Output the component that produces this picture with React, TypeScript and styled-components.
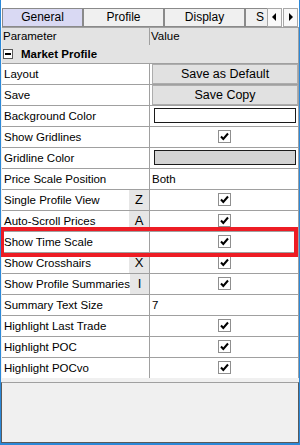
import styled, { createGlobalStyle } from 'styled-components';

const GlobalStyle = createGlobalStyle`
  html, body {
    margin: 0;
    padding: 0;
    background: #ffffff;
  }
  * {
    box-sizing: border-box;
  }
`;

const Frame = styled.div`
  position: relative;
  display: flex;
  flex-direction: column;
  width: 300px;
  height: 445px;
  border-left: 1px solid #2b88d8;
  border-right: 1px solid #2b88d8;
  border-bottom: 2px solid #2b88d8;
  background: #f0f0f0;
  font-family: "Liberation Sans", Arial, sans-serif;
  font-size: 11.5px;
  color: #000000;
  overflow: hidden;
`;

const TabStrip = styled.div`
  display: flex;
  align-items: flex-end;
  height: 27px;
  padding-left: 1px;
  background: #ffffff;
`;

const TabRow = styled.div`
  display: flex;
  width: 266px;
  overflow: hidden;
`;

const Tab = styled.div<{ $active?: boolean; $partial?: boolean }>`
  flex: 0 0 ${(p) => (p.$partial ? '24px' : '82px')};
  height: 19px;
  display: flex;
  align-items: center;
  justify-content: ${(p) => (p.$partial ? 'flex-start' : 'center')};
  padding-left: ${(p) => (p.$partial ? '10px' : '0')};
  margin-right: -1px;
  border: 1px solid #8a8a8a;
  border-right-width: ${(p) => (p.$partial ? '0' : '2px')};
  background: ${(p) => (p.$active ? '#d9d9f3' : '#f0f0f0')};
  font-size: 12px;
  white-space: nowrap;
`;

const ScrollButtons = styled.div`
  display: flex;
  height: 19px;
`;

const ScrollButton = styled.div`
  width: 15px;
  height: 19px;
  display: flex;
  align-items: center;
  justify-content: center;
  border: 1px solid #a8a8a8;
  background: #f9f9f9;
  margin-right: 1px;
`;

const Grid = styled.div`
  margin-left: 1px;
  width: 297px;
  border-right: 1px solid #a0a0a0;
  background: #ffffff;
`;

const HeaderRow = styled.div`
  display: flex;
  height: 18px;
  background: #e3e3e3;
  border-top: 1px solid #a0a0a0;
`;

const HeaderCell = styled.div<{ $left?: boolean }>`
  width: ${(p) => (p.$left ? '148px' : '147px')};
  display: flex;
  align-items: center;
  padding-left: 1px;
  border-right: ${(p) => (p.$left ? '1px solid #a0a0a0' : 'none')};
`;

const CategoryRow = styled.div`
  display: flex;
  align-items: center;
  gap: 8px;
  height: 18px;
  padding-left: 1px;
  background: #e3e3e3;
  font-weight: bold;
`;

const Collapse = styled.div`
  position: relative;
  width: 10px;
  height: 10px;
  border: 1px solid #5a5a5a;
  background: #ffffff;
  &::after {
    content: '';
    position: absolute;
    left: 1px;
    right: 1px;
    top: 3px;
    height: 2px;
    background: #000000;
  }
`;

const Row = styled.div`
  display: flex;
  height: 21px;
  border-top: 1px solid #a0a0a0;
`;

const NameCell = styled.div`
  width: 148px;
  display: flex;
  border-right: 1px solid #a0a0a0;
`;

const NameText = styled.div`
  flex: 1;
  display: flex;
  align-items: center;
  padding-left: 2px;
  white-space: nowrap;
`;

const Key = styled.div`
  width: 20px;
  display: flex;
  align-items: center;
  justify-content: center;
  background: #e6e6e6;
  font-size: 13px;
`;

const ValueCell = styled.div<{ $center?: boolean }>`
  width: 148px;
  display: flex;
  align-items: center;
  justify-content: ${(p) => (p.$center ? 'center' : 'flex-start')};
  padding-left: ${(p) => (p.$center ? '0' : '2px')};
`;

const CellButton = styled.div`
  width: 100%;
  height: 100%;
  display: flex;
  align-items: center;
  justify-content: center;
  background: #e1e1e1;
  border: 1px solid #adadad;
  font-size: 12.5px;
`;

const Swatch = styled.div<{ $fill: string }>`
  width: 142px;
  height: 15px;
  margin-left: 2px;
  border: 1px solid #1a1a1a;
  background: ${(p) => p.$fill};
`;

const Box = styled.div`
  width: 13px;
  height: 13px;
  display: flex;
  align-items: center;
  justify-content: center;
  border: 1px solid #8f8f8f;
  background: #ffffff;
`;

const Filler = styled.div`
  flex: 1;
`;

const Description = styled.div`
  height: 62px;
  margin-top: 4px;
  background: #f0f0f0;
  border-top: 1px solid #a0a0a0;
  border-left: 1px solid #5a5a5a;
  border-right: 1px solid #5a5a5a;
  border-bottom: 1px solid #5a5a5a;
`;

const Marker = styled.div`
  position: absolute;
  left: -1px;
  top: 227px;
  width: 298px;
  height: 30px;
  border: 4px solid #ed1c24;
  pointer-events: none;
`;

function Check(): JSX.Element {
  return (
    <Box>
      <svg width="9" height="9" viewBox="0 0 9 9">
        <polyline points="1,4.5 3.3,7 8,1.5" fill="none" stroke="#000" strokeWidth="2" />
      </svg>
    </Box>
  );
}

type Value =
  | { kind: 'button'; label: string }
  | { kind: 'swatch'; fill: string }
  | { kind: 'check' }
  | { kind: 'text'; label: string };

const rows: { name: string; key?: string; value: Value }[] = [
  { name: 'Layout', value: { kind: 'button', label: 'Save as Default' } },
  { name: 'Save', value: { kind: 'button', label: 'Save Copy' } },
  { name: 'Background Color', value: { kind: 'swatch', fill: '#ffffff' } },
  { name: 'Show Gridlines', value: { kind: 'check' } },
  { name: 'Gridline Color', value: { kind: 'swatch', fill: '#d3d3d3' } },
  { name: 'Price Scale Position', value: { kind: 'text', label: 'Both' } },
  { name: 'Single Profile View', key: 'Z', value: { kind: 'check' } },
  { name: 'Auto-Scroll Prices', key: 'A', value: { kind: 'check' } },
  { name: 'Show Time Scale', value: { kind: 'check' } },
  { name: 'Show Crosshairs', key: 'X', value: { kind: 'check' } },
  { name: 'Show Profile Summaries', key: 'I', value: { kind: 'check' } },
  { name: 'Summary Text Size', value: { kind: 'text', label: '7' } },
  { name: 'Highlight Last Trade', value: { kind: 'check' } },
  { name: 'Highlight POC', value: { kind: 'check' } },
  { name: 'Highlight POCvo', value: { kind: 'check' } },
];

function renderValue(v: Value): JSX.Element {
  switch (v.kind) {
    case 'button':
      return <CellButton>{v.label}</CellButton>;
    case 'swatch':
      return <Swatch $fill={v.fill} />;
    case 'check':
      return <Check />;
    default:
      return <>{v.label}</>;
  }
}

function App(): JSX.Element {
  return (
    <>
      <GlobalStyle />
      <Frame>
        <TabStrip>
          <TabRow>
            <Tab $active>General</Tab>
            <Tab>Profile</Tab>
            <Tab>Display</Tab>
            <Tab $partial>S</Tab>
          </TabRow>
          <ScrollButtons>
            <ScrollButton>
              <svg width="5" height="8" viewBox="0 0 5 8"><polygon points="4,0 0,4 4,8" fill="#000" /></svg>
            </ScrollButton>
            <ScrollButton>
              <svg width="5" height="8" viewBox="0 0 5 8"><polygon points="1,0 5,4 1,8" fill="#000" /></svg>
            </ScrollButton>
          </ScrollButtons>
        </TabStrip>
        <Grid>
          <HeaderRow>
            <HeaderCell $left>Parameter</HeaderCell>
            <HeaderCell>Value</HeaderCell>
          </HeaderRow>
          <CategoryRow>
            <Collapse />
            Market Profile
          </CategoryRow>
          {rows.map((r) => (
            <Row key={r.name}>
              <NameCell>
                <NameText>{r.name}</NameText>
                {r.key && <Key>{r.key}</Key>}
              </NameCell>
              <ValueCell $center={r.value.kind === 'check'}>{renderValue(r.value)}</ValueCell>
            </Row>
          ))}
        </Grid>
        <Filler />
        <Description />
        <Marker />
      </Frame>
    </>
  );
}

export default App;
